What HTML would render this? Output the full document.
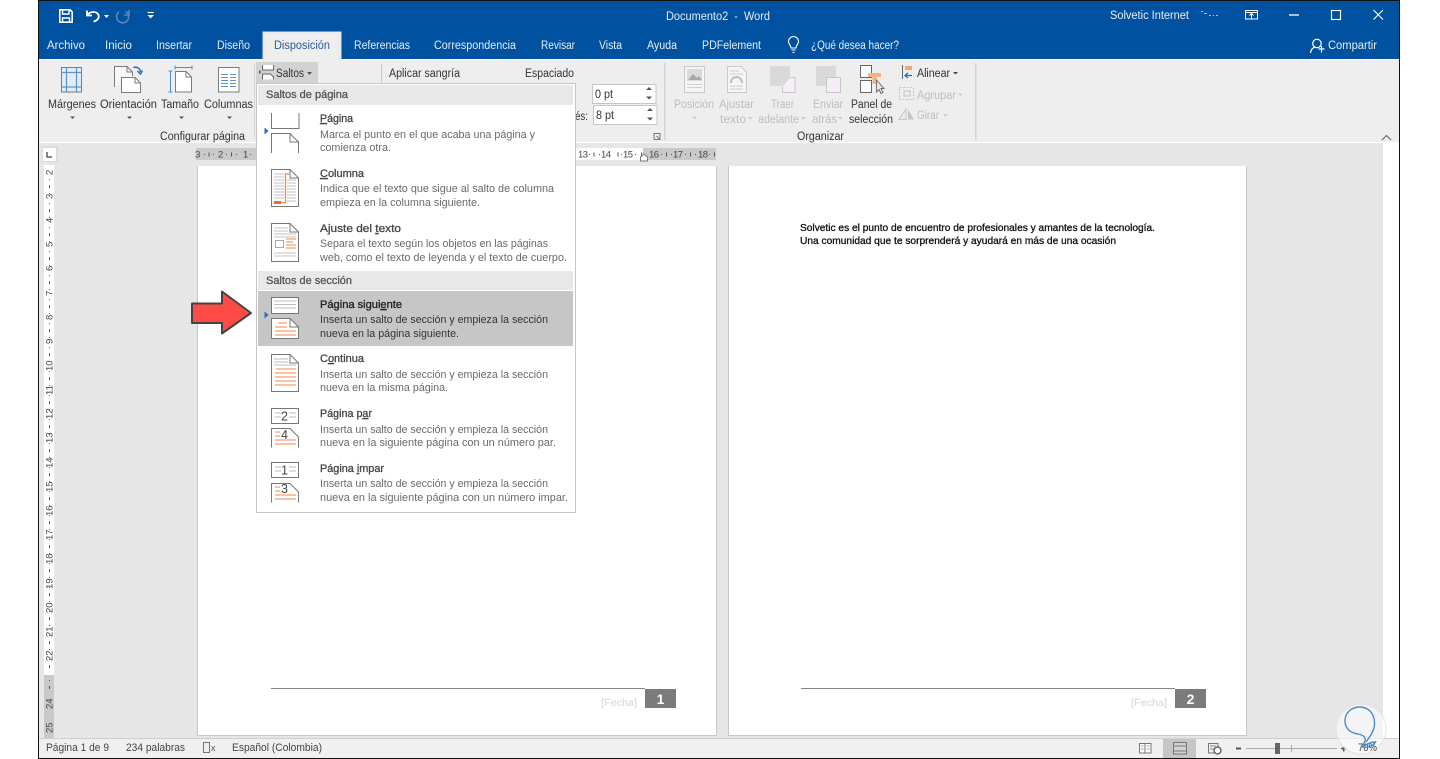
<!DOCTYPE html>
<html lang="es"><head><meta charset="utf-8"><title>Documento2 - Word</title>
<style>
html,body{margin:0;padding:0;background:#fff;width:1440px;height:759px;overflow:hidden}
svg{display:block;position:absolute;left:0;top:0;filter:blur(.3px)}
text{font-family:"Liberation Sans",sans-serif;font-size:11.5px;fill:#3c3c3c;white-space:pre}
.w{fill:#fff}
.t{fill:#e8eef6}
.r{fill:#333}
.d{fill:#bdbdbd}
.h{fill:#555;stroke:#555;stroke-width:.3;font-size:11px}
.b{fill:#444;stroke:#444;stroke-width:.3;font-size:11px}
.g{fill:#6a6a6a;font-size:11px}
.k{fill:#333;font-size:11px}
.rn{font-size:9.5px;fill:#444}
.doc{font-size:10px;fill:#111;stroke:#111;stroke-width:.3}
.f{font-size:10px;fill:#dcdcdc;stroke:#dcdcdc;stroke-width:.2}
.s{fill:#444;font-size:11px}
.n{font-size:12.5px;fill:#444}
</style></head><body>
<svg width="1440" height="759" viewBox="0 0 1440 759" xmlns="http://www.w3.org/2000/svg">
<rect width="1440" height="759" fill="#fff"/>
<rect x="38" y="0" width="1362" height="759" fill="#111"/>
<rect x="39" y="1" width="1360" height="757" fill="#e6e6e6"/>
<!-- title -->
<rect x="39" y="1" width="1360" height="58" fill="#00519f"/>
<rect x="39" y="59" width="1360" height="1" fill="#fff"/>
<rect x="39" y="60" width="1360" height="82" fill="#eeeeee"/>
<rect x="39" y="142" width="1360" height="1" fill="#fff"/>
<!-- QAT -->
<g fill="none" stroke="#fff">
<path d="M59.8 9.8H70L72.2 12V22.2H59.8Z" stroke-width="1.6"/>
<path d="M62.5 10V14H69V10M62.5 22V18H69.5V22" stroke-width="1.4"/>
<path d="M87 10.5V15.5H92M87.5 15C90 11 97 11 98.5 15C99.5 18 97 21 93.5 21.5" stroke-width="1.8"/>
<path d="M119 12A6 6 0 1 0 125.5 11.5M129 10V15H124" stroke="#5f86b9" stroke-width="1.6"/>
<path d="M147.500 12.500H154" stroke-width="1.2"/>
</g>
<path d="M104 15H109L106.500 18ZM147.500 15H154L150.700 18.500Z" fill="#fff"/>
<text x="666" y="20" class="t" textLength="104" lengthAdjust="spacingAndGlyphs">Documento2  -  Word</text>
<text x="1110" y="19" class="t" textLength="79" lengthAdjust="spacingAndGlyphs">Solvetic Internet</text>
<path d="M1201 11h2v1h-2zM1204 13h3v1h-3zM1209 15h2v1h-2zM1213 15h1v1h-1zM1216 15h2v1h-2z" fill="#a9c2de"/>
<g fill="none" stroke="#fff">
<rect x="1245.500" y="10.500" width="12" height="8.500" stroke-width="1"/>
<path d="M1245 12.500H1258M1251.500 18.500V14M1249.500 15.500L1251.500 13.500L1253.500 15.500" stroke-width="1"/>
<path d="M1289 15H1299" stroke-width="1.300"/>
<rect x="1331.500" y="10.500" width="9" height="9" stroke-width="1.200"/>
<path d="M1373.500 10L1383 19.500M1383 10L1373.500 19.500" stroke-width="1.100"/>
</g>
<!-- tabs -->
<rect x="263" y="32" width="78" height="28" fill="#eeeeee"/>
<path d="M263 60V32H341V60" fill="none" stroke="#dfe5ee" stroke-width="1"/>
<text x="47" y="49" class="t" textLength="38" lengthAdjust="spacingAndGlyphs">Archivo</text>
<text x="105" y="49" class="t" textLength="27" lengthAdjust="spacingAndGlyphs">Inicio</text>
<text x="156" y="49" class="t" textLength="36" lengthAdjust="spacingAndGlyphs">Insertar</text>
<text x="217" y="49" class="t" textLength="33" lengthAdjust="spacingAndGlyphs">Diseño</text>
<text x="274" y="49" style="fill:#2b5a9e" textLength="56" lengthAdjust="spacingAndGlyphs">Disposición</text>
<text x="354" y="49" class="t" textLength="56" lengthAdjust="spacingAndGlyphs">Referencias</text>
<text x="434" y="49" class="t" textLength="82" lengthAdjust="spacingAndGlyphs">Correspondencia</text>
<text x="541" y="49" class="t" textLength="34" lengthAdjust="spacingAndGlyphs">Revisar</text>
<text x="599" y="49" class="t" textLength="23" lengthAdjust="spacingAndGlyphs">Vista</text>
<text x="647" y="49" class="t" textLength="30" lengthAdjust="spacingAndGlyphs">Ayuda</text>
<text x="702" y="49" class="t" textLength="59" lengthAdjust="spacingAndGlyphs">PDFelement</text>
<path d="M791 48C791 45 788.500 44.500 788.500 41.500A5 5 0 0 1 798.500 41.500C798.500 44.500 796 45 796 48ZM791.500 50H795.500M792.500 52.500H794.500" fill="none" stroke="#fff" stroke-width="1.100"/>
<text x="811" y="49" class="t" textLength="88" lengthAdjust="spacingAndGlyphs">¿Qué desea hacer?</text>
<path d="M1310.500 52.500C1311 48.500 1313 47 1315.500 46.500M1317 38.800A4.200 4.200 0 1 1 1316.900 38.800M1318.500 48.500H1324.500M1321.500 45.500V52" transform="translate(0,0.500)" fill="none" stroke="#fff" stroke-width="1.200"/>
<text x="1328" y="49" class="t" textLength="49" lengthAdjust="spacingAndGlyphs">Compartir</text>

<!-- ribbon icons: page setup -->
<rect x="61.500" y="67.500" width="20" height="24.500" fill="#e3ecf5" stroke="#7b7b7b"/>
<path d="M66.500 67.500V92M76.500 67.500V92M61.500 72.500H81.500M61.500 87H81.500" stroke="#5b94c9" stroke-width="1.200" fill="none"/>
<path d="M114.500 87V66.500H127L132.500 72V76" fill="#f7f7f7" stroke="#7b7b7b"/>
<path d="M121.500 77.500H135L140.500 83V92.500H121.500Z" fill="#fff" stroke="#7b7b7b"/>
<path d="M127 66.500V72H132.500M135 77.500V83H140.500" fill="none" stroke="#7b7b7b"/>
<path d="M133.500 67.500C137 66.500 140 68 140.500 72M137.500 71L140.500 74L142.500 70.500" fill="none" stroke="#2a6fb5" stroke-width="1.500"/>
<path d="M175.500 71.500H186L191.500 77V92H175.500Z" fill="#fff" stroke="#7b7b7b"/>
<path d="M186 71.500V77H191.500" fill="none" stroke="#7b7b7b"/>
<path d="M175 67.500H192M175 65.500V69.500M192 65.500V69.500M170.500 71V92M168.500 71H172.500M168.500 92H172.500" fill="none" stroke="#4c8fc8" stroke-width="1"/>
<rect x="218.500" y="67.500" width="20.500" height="24.500" fill="#fff" stroke="#7b7b7b"/>
<path d="M221 74.500H228M230 74.500H236M221 77.500H228M230 77.500H236M221 80.500H228M230 80.500H236M221 83.500H228M230 83.500H236M221 86.500H228M230 86.500H236" stroke="#5b94c9" fill="none"/>
<text x="48" y="108" class="r" textLength="48" lengthAdjust="spacingAndGlyphs">Márgenes</text>
<text x="100" y="108" class="r" textLength="57" lengthAdjust="spacingAndGlyphs">Orientación</text>
<text x="161" y="108" class="r" textLength="38" lengthAdjust="spacingAndGlyphs">Tamaño</text>
<text x="204" y="108" class="r" textLength="49" lengthAdjust="spacingAndGlyphs">Columnas</text>
<path d="M70 116.500H75L72.500 119ZM127 116.500H132L129.500 119ZM179 116.500H184L181.500 119ZM227 116.500H232L229.500 119Z" fill="#555"/>
<text x="160" y="140" class="r" textLength="85" lengthAdjust="spacingAndGlyphs">Configurar página</text>
<rect x="254" y="63" width="1" height="76" fill="#d8d8d8"/>
<!-- saltos -->
<rect x="256" y="62" width="62" height="21" fill="#d2d2d2"/>
<path d="M262.500 65V70H273.500V65M262.500 79.500V74H270.500L273.500 77V79.500" fill="#fff" stroke="#666"/>
<path d="M259 70L261.500 72L259 74Z" fill="#2a6fb5"/>
<text x="276" y="77" class="r" textLength="28" lengthAdjust="spacingAndGlyphs">Saltos</text>
<path d="M307 72H312L309.500 75Z" fill="#555"/>
<rect x="381" y="64" width="1" height="19" fill="#c9c9c9"/>
<text x="389" y="77" class="r" textLength="71" lengthAdjust="spacingAndGlyphs">Aplicar sangría</text>
<text x="525" y="77" class="r" textLength="49" lengthAdjust="spacingAndGlyphs">Espaciado</text>
<rect x="592.500" y="84.500" width="63.500" height="19" fill="#fff" stroke="#c6c6c6"/>
<rect x="593.500" y="105.500" width="63.500" height="19" fill="#fff" stroke="#c6c6c6"/>
<text x="595" y="98" class="r" textLength="18" lengthAdjust="spacingAndGlyphs">0 pt</text>
<text x="596" y="119" class="r" textLength="18" lengthAdjust="spacingAndGlyphs">8 pt</text>
<text x="575" y="120" class="r" textLength="13" lengthAdjust="spacingAndGlyphs">és:</text>
<path d="M646 90L649 87L652 90ZM646 96.500H652L649 99.500ZM647 111L650 108L653 111ZM647 117.500H653L650 120.500Z" fill="#555"/>
<path d="M654 133.500H660V139.500H654ZM656.500 136L659.500 139" fill="none" stroke="#777"/>
<rect x="664" y="63" width="1.500" height="77" fill="#d4d4d4"/>
<rect x="975" y="63" width="1.500" height="77" fill="#d4d4d4"/>
<!-- arrange -->
<g fill="none" stroke="#c9c9c9">
<rect x="684.500" y="66.500" width="20" height="26" fill="#f5f5f5"/>
<path d="M727.500 66.500H741L746.500 72V92.500H727.500Z" fill="#f5f5f5"/>
</g>
<rect x="687" y="69" width="15" height="12" fill="#dadada"/>
<path d="M688 80L693 74L697 78L699 76L702 80Z" fill="#a8a8a8"/>
<path d="M687 84.500H702M687 87.500H702M730 71H739M730 74H743M730 86H743M730 89H743" stroke="#cfcfcf"/>
<path d="M731 83C731 75 742 75 742 83" fill="none" stroke="#bdbdbd" stroke-width="2"/>
<rect x="770" y="66" width="20" height="20" fill="#d9d9d9"/>
<path d="M790.500 77.500H795V92.500H782.500V86.500" fill="#f7eff7" stroke="#c6c6c6"/>
<rect x="816" y="66" width="20" height="20" fill="#d9d9d9"/>
<rect x="826.500" y="77.500" width="14" height="15" fill="#f5edf6" stroke="#c6c6c6"/>
<text x="674" y="108" class="d" textLength="40" lengthAdjust="spacingAndGlyphs">Posición</text>
<text x="719" y="108" class="d" textLength="35" lengthAdjust="spacingAndGlyphs">Ajustar</text>
<text x="720" y="123" class="d" textLength="26" lengthAdjust="spacingAndGlyphs">texto</text>
<text x="771" y="108" class="d" textLength="23" lengthAdjust="spacingAndGlyphs">Traer</text>
<text x="758" y="123" class="d" textLength="41" lengthAdjust="spacingAndGlyphs">adelante</text>
<text x="813" y="108" class="d" textLength="30" lengthAdjust="spacingAndGlyphs">Enviar</text>
<text x="812" y="123" class="d" textLength="25" lengthAdjust="spacingAndGlyphs">atrás</text>
<path d="M692 116.500H697L694.500 119ZM748 117H753L750.500 119.500ZM801 117H806L803.500 119.500ZM838 117H843L840.500 119.500ZM958 93.500H963L960.500 96ZM943 114H948L945.500 116.500Z" fill="#c9c9c9"/>
<text x="851" y="108" class="r" textLength="41" lengthAdjust="spacingAndGlyphs">Panel de</text>
<text x="849" y="123" class="r" textLength="44" lengthAdjust="spacingAndGlyphs">selección</text>
<rect x="860.500" y="65.500" width="11" height="12" fill="#fff" stroke="#666"/>
<rect x="860.500" y="80.500" width="11" height="12" fill="#fff" stroke="#666"/>
<path d="M868 73H881V77H876.500V84H872.500V77H868Z" fill="#f4b183"/>
<path d="M876.500 80V92L879 89.500L881 93.500L883 92.500L881 88.500H884Z" fill="#e8e8e8" stroke="#666" stroke-width=".9"/>
<path d="M902.500 65V79" stroke="#666" fill="none"/>
<rect x="905" y="66" width="7" height="4" fill="#f0a878"/>
<path d="M912 75.500H905M908 73L905 75.500L908 78" fill="none" stroke="#2a6fb5" stroke-width="1.300"/>
<text x="917" y="77" class="r" textLength="33" lengthAdjust="spacingAndGlyphs">Alinear</text>
<path d="M953 72H958L955.500 74.500Z" fill="#444"/>
<path d="M899.500 87.500H913.500V99.500H899.500Z" fill="none" stroke="#c4c4c4" stroke-dasharray="2 1.500"/>
<rect x="904" y="91" width="6" height="5" fill="none" stroke="#c4c4c4"/>
<text x="917" y="99" class="d" textLength="39" lengthAdjust="spacingAndGlyphs">Agrupar</text>
<path d="M899 119.500L906 109V119.500Z" fill="none" stroke="#c4c4c4"/>
<path d="M908 109.500L914 119.500H908Z" fill="#c4c4c4"/>
<text x="917" y="119" class="d" textLength="22" lengthAdjust="spacingAndGlyphs">Girar</text>
<text x="797" y="140" class="r" textLength="47" lengthAdjust="spacingAndGlyphs">Organizar</text>
<path d="M1382 140L1386.500 135.500L1391 140" fill="none" stroke="#666" stroke-width="1.100"/>

<!-- doc area chrome -->
<rect x="1383" y="143" width="16" height="596" fill="#fff"/>
<rect x="42" y="146" width="16" height="16" fill="#dcdcdc"/>
<rect x="43" y="148" width="13" height="13" fill="#fff"/>
<path d="M47 152V157H52" fill="none" stroke="#444" stroke-width="1.300"/>
<!-- top ruler -->
<rect x="196" y="148" width="62" height="12" fill="#c9c9c9"/>
<rect x="575" y="148" width="68" height="12" fill="#fff"/>
<rect x="643" y="148" width="73" height="12" fill="#c9c9c9"/>
<text x="195" y="157.500" class="rn">3</text><text x="218" y="157.500" class="rn">2</text><text x="243" y="157.500" class="rn">1</text>
<text x="578" y="157.500" class="rn" textLength="10">13</text><text x="601" y="157.500" class="rn" textLength="10">14</text><text x="623" y="157.500" class="rn" textLength="10">15</text>
<text x="649" y="157.500" class="rn" textLength="10">16</text><text x="673" y="157.500" class="rn" textLength="10">17</text><text x="698" y="157.500" class="rn" textLength="10">18</text>
<path d="M204 154h1v1h-1zM208.500 152.500h1v4h-1zM213 154h1v1h-1zM226 154h1v1h-1zM231 152.500h1v4h-1zM236 154h1v1h-1zM250 154h1v1h-1zM589 154h1v1h-1zM593.500 152.500h1v4h-1zM599 154h1v1h-1zM617.500 152.500h1v4h-1zM621 154h1v1h-1zM635 154h1v1h-1zM641 152.500h1v4h-1zM661 154h1v1h-1zM666 152.500h1v4h-1zM671 154h1v1h-1zM685 154h1v1h-1zM690 152.500h1v4h-1zM695 154h1v1h-1zM709 154h1v1h-1zM714 152.500h1v4h-1z" fill="#555"/>
<path d="M640.500 161V157L644 154L647.500 157V161Z" fill="#fff" stroke="#777"/>
<!-- left ruler -->
<rect x="44" y="165" width="10" height="510" fill="#fff"/>
<rect x="44" y="675" width="10" height="63" fill="#c9c9c9"/>
<g>
<text transform="translate(52.500,175) rotate(-90)" class="rn">2</text>
<text transform="translate(52.500,199) rotate(-90)" class="rn">3</text>
<text transform="translate(52.500,223) rotate(-90)" class="rn">4</text>
<text transform="translate(52.500,247) rotate(-90)" class="rn">5</text>
<text transform="translate(52.500,271) rotate(-90)" class="rn">6</text>
<text transform="translate(52.500,296) rotate(-90)" class="rn">7</text>
<text transform="translate(52.500,320) rotate(-90)" class="rn">8</text>
<text transform="translate(52.500,344) rotate(-90)" class="rn">9</text>
<text transform="translate(52.500,371) rotate(-90)" class="rn">10</text>
<text transform="translate(52.500,395) rotate(-90)" class="rn">11</text>
<text transform="translate(52.500,419) rotate(-90)" class="rn">12</text>
<text transform="translate(52.500,443) rotate(-90)" class="rn">13</text>
<text transform="translate(52.500,468) rotate(-90)" class="rn">14</text>
<text transform="translate(52.500,492) rotate(-90)" class="rn">15</text>
<text transform="translate(52.500,516) rotate(-90)" class="rn">16</text>
<text transform="translate(52.500,540) rotate(-90)" class="rn">17</text>
<text transform="translate(52.500,564) rotate(-90)" class="rn">18</text>
<text transform="translate(52.500,589) rotate(-90)" class="rn">19</text>
<text transform="translate(52.500,613) rotate(-90)" class="rn">20</text>
<text transform="translate(52.500,637) rotate(-90)" class="rn">21</text>
<text transform="translate(52.500,661) rotate(-90)" class="rn">22</text>
<text transform="translate(52.500,709) rotate(-90)" class="rn">24</text>
<text transform="translate(52.500,733) rotate(-90)" class="rn">25</text>
</g>
<path stroke="#555" stroke-width="1" stroke-dasharray="1 5 3 5 1 9" fill="none" d="M49.500 179V670"/>
<path stroke="#555" stroke-width="1" stroke-dasharray="1 5 3 5 1 9" fill="none" d="M49.500 680V692"/>

<!-- pages -->
<rect x="198" y="166" width="518" height="569" fill="#fff"/>
<path d="M197.500 166V735.500H716.500V166" fill="none" stroke="#c8c8c8"/>
<rect x="729" y="166" width="517" height="569" fill="#fff"/>
<path d="M728.500 166V735.500H1246.500V166" fill="none" stroke="#c8c8c8"/>
<text x="800" y="231" class="doc" textLength="355" lengthAdjust="spacingAndGlyphs">Solvetic es el punto de encuentro de profesionales y amantes de la tecnología.</text>
<text x="800" y="244" class="doc" textLength="316" lengthAdjust="spacingAndGlyphs">Una comunidad que te sorprenderá y ayudará en más de una ocasión</text>
<rect x="271" y="688" width="374" height="1" fill="#858585"/>
<rect x="645" y="689" width="31" height="19" fill="#7b7b7b"/>
<text x="660.500" y="704" text-anchor="middle" style="font-size:14px;font-weight:700;fill:#fff">1</text>
<text x="601" y="706" class="f" textLength="36" lengthAdjust="spacingAndGlyphs">[Fecha]</text>
<rect x="801" y="688" width="374" height="1" fill="#858585"/>
<rect x="1175" y="689" width="31" height="19" fill="#7b7b7b"/>
<text x="1190.500" y="704" text-anchor="middle" style="font-size:14px;font-weight:700;fill:#fff">2</text>
<text x="1131" y="706" class="f" textLength="36" lengthAdjust="spacingAndGlyphs">[Fecha]</text>

<!-- red arrow -->
<path d="M192 303.500H222V291.500L251 313L222 333.500V323H192Z" fill="#ff4b45" stroke="#444" stroke-width="2" stroke-linejoin="round"/>

<!-- menu -->
<rect x="256.500" y="83.500" width="319" height="429" fill="#fff" stroke="#c6c6c6"/>
<rect x="258" y="85" width="315" height="20" fill="#e8e8e8"/>
<rect x="258" y="271" width="315" height="19" fill="#e8e8e8"/>
<rect x="258" y="291" width="315" height="55" fill="#c6c6c6"/>
<text x="266" y="98" class="h" textLength="82" lengthAdjust="spacingAndGlyphs">Saltos de página</text>
<text x="266" y="284" class="h" textLength="86" lengthAdjust="spacingAndGlyphs">Saltos de sección</text>

<path d="M264.500 127.500L268.500 131L264.500 134.500ZM264.500 311.500L268.500 315L264.500 318.500Z" fill="#2a6fb5"/>
<!-- pagina -->
<path d="M271.500 113V128.500H299V113M271.500 153V133.500H290L298.500 142V153M290 133.500V142H298.500" fill="none" stroke="#777"/>
<text x="320" y="122" class="b" textLength="33" lengthAdjust="spacingAndGlyphs"><tspan text-decoration="underline">P</tspan>ágina</text>
<text x="320" y="138" class="g" textLength="215" lengthAdjust="spacingAndGlyphs">Marca el punto en el que acaba una página y</text>
<text x="320" y="151" class="g" textLength="71" lengthAdjust="spacingAndGlyphs">comienza otra.</text>
<!-- columna -->
<path d="M271.500 169.500H290L298.500 178V206.500H271.500Z" fill="#fff" stroke="#777"/>
<path d="M290 169.500V178H298.500" fill="none" stroke="#777"/>
<path d="M274 174H284M274 177H284M274 180H284M274 183H284M274 186H284M274 189H284M274 192H284M274 195H284M274 198H284M287 180H296M287 183H296M287 186H296M287 189H296M287 192H296M287 195H296M287 198H296M287 201H296" stroke="#c2c2c2" fill="none"/>
<path d="M275 202.500H285.500V174H290" fill="none" stroke="#f08a4b" stroke-width="1.300"/>
<rect x="274" y="201" width="7" height="3" fill="#ea6f2d"/>
<text x="320" y="177" class="b" textLength="44" lengthAdjust="spacingAndGlyphs"><tspan text-decoration="underline">C</tspan>olumna</text>
<text x="320" y="192" class="g" textLength="234" lengthAdjust="spacingAndGlyphs">Indica que el texto que sigue al salto de columna</text>
<text x="320" y="206" class="g" textLength="160" lengthAdjust="spacingAndGlyphs">empieza en la columna siguiente.</text>
<!-- ajuste -->
<path d="M271.500 223.500H290L298.500 232V261.500H271.500Z" fill="#fff" stroke="#777"/>
<path d="M290 223.500V232H298.500" fill="none" stroke="#777"/>
<path d="M274 228H288M274 231H288M274 234H296M274 237H296M274 253H296M274 256H296" stroke="#c2c2c2" fill="none"/>
<rect x="275.500" y="240.500" width="8" height="7" fill="#fff" stroke="#a8a8a8"/>
<path d="M286 239H296M286 242H293M286 245H296M286 248H296" stroke="#f08a4b" fill="none"/>
<text x="320" y="232" class="b" textLength="81" lengthAdjust="spacingAndGlyphs">Ajuste del <tspan text-decoration="underline">t</tspan>exto</text>
<text x="320" y="247" class="g" textLength="228" lengthAdjust="spacingAndGlyphs">Separa el texto según los objetos en las páginas</text>
<text x="320" y="261" class="g" textLength="247" lengthAdjust="spacingAndGlyphs">web, como el texto de leyenda y el texto de cuerpo.</text>
<!-- pagina siguiente -->
<rect x="271.500" y="297.500" width="27" height="16" fill="#fff" stroke="#777"/>
<path d="M274 301H296M274 304.500H296M274 308H296" stroke="#bdbdbd" fill="none"/>
<path d="M271.500 338.500V318.500H290L298.500 327V338.500Z" fill="#fff" stroke="#777"/>
<path d="M290 318.500V327H298.500" fill="none" stroke="#777"/>
<path d="M278 323H287M275 327H287M275 331H296M275 335H296" stroke="#f08a4b" fill="none"/>
<text x="320" y="308" style="fill:#222;stroke:#222;stroke-width:.35;font-size:11px" textLength="82" lengthAdjust="spacingAndGlyphs">Página sigui<tspan text-decoration="underline">e</tspan>nte</text>
<text x="320" y="323" class="k" textLength="228" lengthAdjust="spacingAndGlyphs">Inserta un salto de sección y empieza la sección</text>
<text x="320" y="337" class="k" textLength="139" lengthAdjust="spacingAndGlyphs">nueva en la página siguiente.</text>
<!-- continua -->
<path d="M271.500 354.500H290L298.500 363V391.500H271.500Z" fill="#fff" stroke="#777"/>
<path d="M290 354.500V363H298.500" fill="none" stroke="#777"/>
<path d="M274 359H288M274 362H288M274 365H296" stroke="#bdbdbd" fill="none"/>
<path d="M276 369H296M275 373H296M275 377H296M275 381H296M275 385H296" stroke="#f08a4b" fill="none"/>
<text x="320" y="362" class="b" textLength="44" lengthAdjust="spacingAndGlyphs">C<tspan text-decoration="underline">o</tspan>ntinua</text>
<text x="320" y="378" class="g" textLength="228" lengthAdjust="spacingAndGlyphs">Inserta un salto de sección y empieza la sección</text>
<text x="320" y="391" class="g" textLength="128" lengthAdjust="spacingAndGlyphs">nueva en la misma página.</text>
<!-- par -->
<path d="M271.500 408.500H298.500V423.500H271.500Z" fill="#fff" stroke="#777"/>
<path d="M275 413H281M275 417H281M289 413H296M289 417H296" stroke="#bdbdbd" fill="none"/>
<text x="281" y="420.500" class="n">2</text>
<path d="M271.500 447.500V428.500H290L298.500 437V447.500" fill="#fff" stroke="#777"/>
<path d="M275 432H280M275 436H280M275 440H296M275 444H296" stroke="#f08a4b" fill="none"/>
<text x="281" y="439" class="n">4</text>
<text x="320" y="417" class="b" textLength="52" lengthAdjust="spacingAndGlyphs">Página p<tspan text-decoration="underline">a</tspan>r</text>
<text x="320" y="433" class="g" textLength="228" lengthAdjust="spacingAndGlyphs">Inserta un salto de sección y empieza la sección</text>
<text x="320" y="446" class="g" textLength="236" lengthAdjust="spacingAndGlyphs">nueva en la siguiente página con un número par.</text>
<!-- impar -->
<path d="M271.500 462.500H298.500V477.500H271.500Z" fill="#fff" stroke="#777"/>
<path d="M275 467H281M275 471H281M289 467H296M289 471H296" stroke="#bdbdbd" fill="none"/>
<text x="281" y="474.500" class="n">1</text>
<path d="M271.500 502.500V483.500H290L298.500 492V502.500" fill="#fff" stroke="#777"/>
<path d="M275 487H280M275 491H280M275 495H296M275 499H296" stroke="#f08a4b" fill="none"/>
<text x="281" y="493" class="n">3</text>
<text x="320" y="472" class="b" textLength="64" lengthAdjust="spacingAndGlyphs">Página <tspan text-decoration="underline">i</tspan>mpar</text>
<text x="320" y="487" class="g" textLength="228" lengthAdjust="spacingAndGlyphs">Inserta un salto de sección y empieza la sección</text>
<text x="320" y="501" class="g" textLength="248" lengthAdjust="spacingAndGlyphs">nueva en la siguiente página con un número impar.</text>

<!-- status -->
<rect x="39" y="738" width="1360" height="1" fill="#cfcfcf"/>
<rect x="39" y="739" width="1360" height="19" fill="#f0f0f0"/>
<text x="46" y="751" class="s" textLength="63" lengthAdjust="spacingAndGlyphs">Página 1 de 9</text>
<text x="126" y="751" class="s" textLength="59" lengthAdjust="spacingAndGlyphs">234 palabras</text>
<path d="M203.500 742.500H209.500V752.500H203.500ZM209.500 742.500V752.500" fill="none" stroke="#777"/>
<text x="211" y="751" style="font-size:9px;fill:#555">x</text>
<text x="232" y="751" class="s" textLength="90" lengthAdjust="spacingAndGlyphs">Español (Colombia)</text>
<path d="M1139.500 743.500H1145V753H1139.500ZM1145 743.500H1151V753H1145Z" fill="#fff" stroke="#777"/>
<path d="M1141 746H1143.500M1141 749H1143.500M1147 746H1149.500M1147 749H1149.500" stroke="#999"/>
<rect x="1163" y="739" width="33" height="19" fill="#c6c6c6"/>
<path d="M1173.500 742.500H1186.500V754H1173.500ZM1173.500 746H1186.500M1173.500 751H1186.500" fill="#d2d2d2" stroke="#777"/>
<path d="M1208.500 743.500H1218V753H1208.500Z" fill="#eee" stroke="#777"/>
<path d="M1210 746H1216M1210 749H1214" stroke="#888"/>
<circle cx="1217.500" cy="750.500" r="3.500" fill="#fff" stroke="#555" stroke-width="1.300"/>
<rect x="1236" y="747.500" width="5" height="2" fill="#555"/>
<rect x="1246" y="748" width="91" height="1" fill="#aaa"/>
<rect x="1275" y="743" width="5" height="11" fill="#666"/>
<rect x="1291" y="745" width="1" height="7" fill="#aaa"/>
<path d="M1341 748.500H1346.500M1343.700 746V751.500" stroke="#555" stroke-width="1.600"/>

<!-- watermark -->
<circle cx="1361" cy="729" r="25" fill="#fff" fill-opacity=".55" stroke="#e5dfe8" stroke-width="1"/>
<text x="1358" y="751" class="s" textLength="19" lengthAdjust="spacingAndGlyphs">70%</text>
<path d="M1366 742C1371 735 1375 730 1374.500 722C1374 713 1368 707 1360 707C1351 707 1345 713 1345 721C1345 728 1350 733 1358 734C1363 735 1366 737 1365 741L1362 747C1367 748 1373 746 1375.500 742C1371 742 1367 744 1364 746" fill="none" stroke="#4a8cc9" stroke-width="1.400"/>
</svg>
</body></html>
